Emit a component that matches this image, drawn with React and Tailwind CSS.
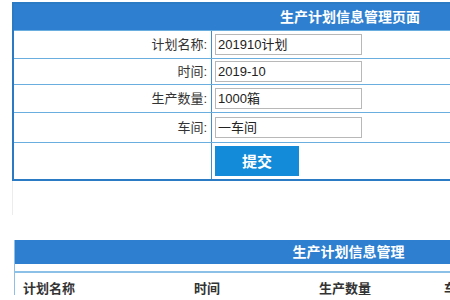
export default function App() {
  const font = { fontFamily: '"Liberation Sans","Noto Sans CJK SC",sans-serif' };
  const rows = [
    { label: "计划名称:", value: "201910计划", h: "h-[28px]" },
    { label: "时间:", value: "2019-10", h: "h-[26px]" },
    { label: "生产数量:", value: "1000箱", h: "h-[28px]" },
    { label: "车间:", value: "一车间", h: "h-[30px]" },
  ];
  return (
    <div className="w-[450px] h-[300px] overflow-hidden bg-white" style={font}>
      <div className="ml-[12px] mt-[2px] w-[676px] border-2 border-[#2a7bc4]">
        <div className="h-[26px] bg-[#2e7fd0] flex items-center justify-center text-white font-bold text-[14px] leading-none">
          生产计划信息管理页面
        </div>
        {rows.map((r) => (
          <div key={r.label} className={`grid grid-cols-[198px_1fr] border-t border-[#6aaee0] ${r.h}`}>
            <div className="border-r border-[#3f8fd0] flex items-center justify-end pr-[4px] text-[13px] text-[#333] leading-none">
              {r.label}
            </div>
            <div className="flex items-center pl-[3px]">
              <div className="w-[147px] h-[21px] border border-[#b8b8b8] flex items-center pl-[2px] text-[13px] text-[#222] leading-none">
                {r.value}
              </div>
            </div>
          </div>
        ))}
        <div className="grid grid-cols-[198px_1fr] border-t border-[#6aaee0] h-[37px]">
          <div className="border-r border-[#3f8fd0]" />
          <div className="flex items-center pl-[3px]">
            <button className="w-[84px] h-[30px] bg-[#138bd8] text-white text-[15px] font-bold leading-none">
              提交
            </button>
          </div>
        </div>
      </div>
      <div className="ml-[12px] h-[34px] w-px bg-[#ececec]" />
      <div className="ml-[14px] mt-[25px] w-[668px] border-l border-[#8cc0e6]">
        <div className="h-[24px] bg-[#2e7fd0] flex items-center justify-center text-white font-bold text-[14px] leading-none">
          生产计划信息管理
        </div>
        <div className="h-[7px]" />
        <div className="h-[2px] bg-[#8cc0e6]" />
        <div className="grid grid-cols-[171px_125px_125px_1fr] pt-[9px] text-[13px] font-bold text-[#333] leading-none">
          <div className="pl-[8px]">计划名称</div>
          <div className="pl-[8px]">时间</div>
          <div className="pl-[8px]">生产数量</div>
          <div className="pl-[8px]">车间</div>
        </div>
      </div>
    </div>
  );
}
